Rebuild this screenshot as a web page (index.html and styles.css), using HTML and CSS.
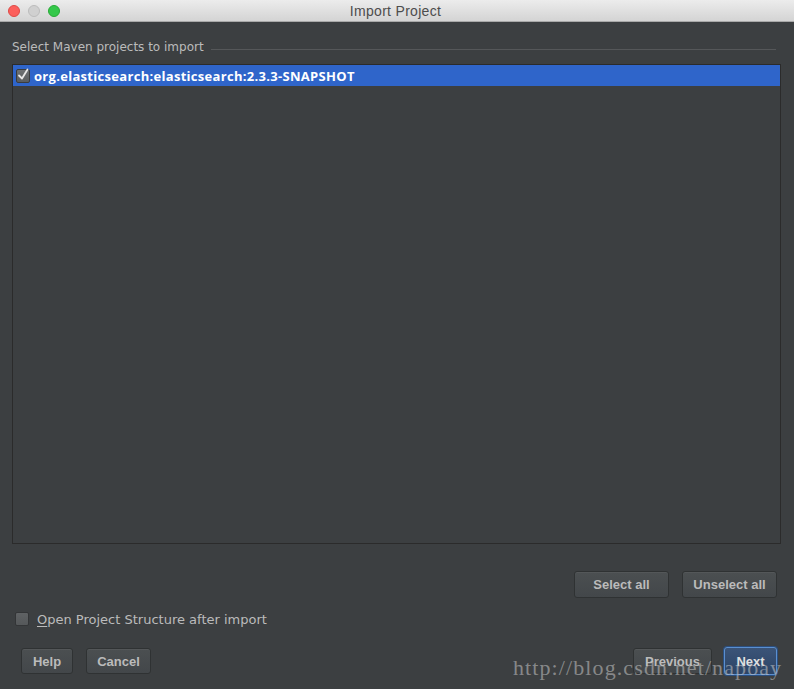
FILE: index.html
```html
<!DOCTYPE html>
<html>
<head>
<meta charset="utf-8">
<link rel="stylesheet" href="styles.css">
</head>
<body>
<div class="window">
  <div class="titlebar">
    <div class="lights">
      <span class="light red"></span>
      <span class="light grey"></span>
      <span class="light green"></span>
    </div>
    <div class="title">Import Project</div>
  </div>
  <div class="content">
    <div class="group-head">
      <span class="group-label">Select Maven projects to import</span>
      <span class="group-line"></span>
    </div>
    <div class="list">
      <div class="row selected">
        <span class="cb checked">
          <svg width="14" height="14" viewBox="0 0 14 14"><path d="M3 7.5 L6 10.5 L11.5 1.5" fill="none" stroke="#e8e8e8" stroke-width="1.8" stroke-linecap="round" stroke-linejoin="round"/></svg>
        </span>
        <span class="row-text">org.elasticsearch:elasticsearch:2.3.3-SNAPSHOT</span>
      </div>
    </div>
    <div class="sel-buttons">
      <button class="btn w95">Select all</button>
      <button class="btn w95">Unselect all</button>
    </div>
    <div class="option">
      <span class="cb plain"></span>
      <span class="opt-text"><u>O</u>pen Project Structure after import</span>
    </div>
    <div class="footer">
      <div class="left">
        <button class="btn help">Help</button>
        <button class="btn cancel">Cancel</button>
      </div>
      <div class="right">
        <button class="btn prev">Previous</button>
        <button class="btn next">Next</button>
      </div>
    </div>
  </div>
  <div class="watermark">http://blog.csdn.net/napoay</div>
</div>
</body>
</html>
```

FILE: styles.css
```css
html, body {
  margin: 0;
  padding: 0;
  background: #3c3f41;
}
.window {
  width: 794px;
  height: 689px;
  position: relative;
  overflow: hidden;
  background: #3c3f41;
  font-family: "DejaVu Sans", sans-serif;
}
.titlebar {
  height: 22px;
  background: linear-gradient(#ececec, #d4d4d4);
  border-bottom: 1px solid #a9a9a9;
  box-sizing: border-box;
  position: relative;
  display: flex;
  align-items: center;
  justify-content: center;
}
.lights {
  position: absolute;
  left: 8px;
  top: 5px;
  display: flex;
  gap: 8px;
}
.light {
  width: 12px;
  height: 12px;
  border-radius: 50%;
  box-sizing: border-box;
}
.light.red { background: #fc605c; border: 1px solid #de4a46; }
.light.grey { background: #d0d0d0; border: 1px solid #bcbcbc; }
.light.green { background: #34c84a; border: 1px solid #27aa35; }
.title {
  font-family: "Liberation Sans", sans-serif;
  font-size: 14px;
  letter-spacing: 0.3px;
  color: #4d4d4d;
  margin-left: -3px;
}
.content {
  padding: 17px 13px 0 12px;
}
.group-head {
  display: flex;
  align-items: center;
  height: 16px;
  gap: 7px;
}
.group-label {
  font-size: 12px;
  color: #bbbbbb;
  white-space: nowrap;
}
.group-line {
  flex: 1;
  height: 1px;
  background: #555759;
  margin-top: 4px;
  margin-right: 5px;
}
.list {
  margin-top: 9px;
  height: 480px;
  border: 1px solid #2b2b2b;
  box-sizing: border-box;
  background: #3c3f41;
}
.row {
  height: 21px;
  display: flex;
  align-items: center;
  padding-left: 3px;
  gap: 4px;
}
.row.selected {
  background: #2f65ca;
}
.cb {
  width: 14px;
  height: 14px;
  border-radius: 2px;
  box-sizing: border-box;
  display: inline-block;
  position: relative;
}
.cb.checked {
  background: linear-gradient(#6e7173, #5a5d5f);
  border: 1px solid #3a3c3d;
}
.cb.checked svg {
  position: absolute;
  left: -1px;
  top: -2px;
}
.row-text {
  color: #ffffff;
  font-size: 13px;
  font-weight: bold;
  font-family: "Open Sans", sans-serif;
  letter-spacing: 0.3px;
}
.sel-buttons {
  display: flex;
  justify-content: flex-end;
  gap: 13px;
  margin-top: 27px;
  padding-right: 4px;
}
.btn {
  height: 27px;
  box-sizing: border-box;
  border: 1px solid #2f3233;
  border-radius: 3px;
  background: linear-gradient(#4b4f51, #43474a);
  box-shadow: inset 0 1px 0 rgba(255,255,255,0.05);
  color: #bbbbbb;
  font-family: "Liberation Sans", sans-serif;
  font-size: 13px;
  font-weight: bold;
  padding: 0;
  margin: 0;
}
.w95 { width: 95px; }
.option {
  display: flex;
  align-items: center;
  margin-top: 13px;
  margin-left: 3px;
  gap: 8px;
  height: 16px;
}
.cb.plain {
  background: linear-gradient(#5f6264, #55585a);
  border: 1px solid #333537;
}
.opt-text {
  font-size: 13px;
  color: #bbbbbb;
}
.opt-text u {
  text-decoration-thickness: 1px;
  text-underline-offset: 2px;
}
.footer {
  display: flex;
  justify-content: space-between;
  align-items: center;
  margin-top: 20px;
  padding: 0 4px 0 9px;
}
.left, .right {
  display: flex;
  gap: 12px;
  align-items: center;
}
.help { width: 52px; height: 26px; }
.cancel { width: 65px; height: 26px; margin-left: 1px; }
.prev { width: 79px; height: 26px; }
.next {
  width: 53px;
  height: 28px;
  border: 1px solid #5b8fcf;
  background: linear-gradient(#3b5478, #2c4466);
  color: #e0e0e0;
  box-shadow: 0 0 0 1px #2b4f80;
}
.watermark {
  position: absolute;
  left: 513px;
  top: 655px;
  font-family: "Liberation Serif", serif;
  font-size: 22px;
  color: rgba(200, 200, 200, 0.55);
  letter-spacing: 1.1px;
  pointer-events: none;
}
```
